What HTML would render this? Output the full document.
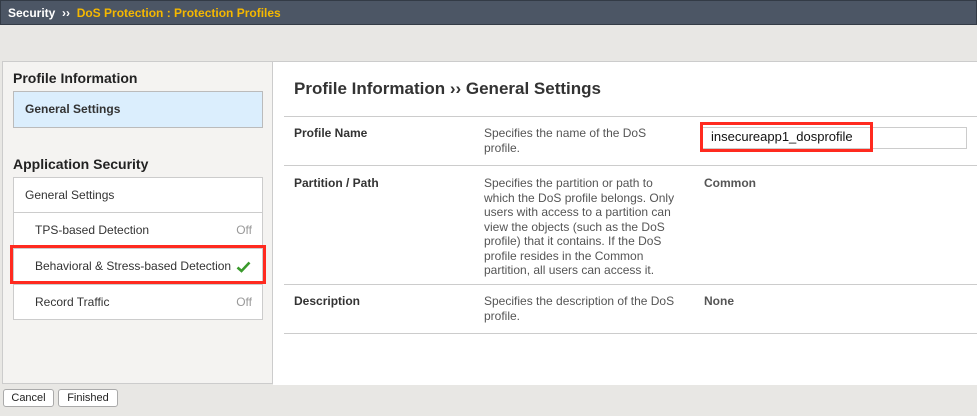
<!DOCTYPE html>
<html><head><style>
body{margin:0;width:977px;height:416px;background:#e8e7e4;font-family:"Liberation Sans",sans-serif;position:relative;overflow:hidden;color:#222}
.a{position:absolute}
.hdr{left:0;top:0;background:#4c5665;border:1px solid #333b46;font-weight:bold;font-size:12px;line-height:24px;color:#fff;padding-left:7px;box-sizing:border-box;width:977px;height:25px}
.hdr span{color:#f5b800}
.side{left:2px;top:61px;width:271px;height:323px;background:#f4f3f1;border:1px solid #ccc;box-sizing:border-box}
.main{left:273px;top:61px;width:704px;height:323px;background:#fff;border-top:1px solid #ccc}
.h{font-weight:bold;font-size:14px;color:#222}
.row{left:13px;width:250px;height:36px;border:1px solid #ccc;box-sizing:border-box;background:#fff;font-size:12px;line-height:34px;color:#333}
.line{left:284px;width:693px;height:1px;background:#ccc}
.lbl{font-size:12px;font-weight:bold;color:#333}
.d{font-size:12px;color:#555;line-height:14.5px;width:200px}
.btn{top:389px;height:16px;border:1px solid #aaa;border-radius:3px;background:#fff;font-size:11px;line-height:16px;text-align:center;color:#222}
</style></head><body>
<div class="a hdr">Security &nbsp;›› &nbsp;<span>DoS Protection : Protection Profiles</span></div>
<div class="a side"></div>
<div class="a main"></div>
<div class="a h" style="left:13px;top:70px">Profile Information</div>
<div class="a" style="left:13px;top:91px;width:250px;height:37px;background:#dbeefd;border:1px solid #bbb;box-sizing:border-box;font-size:12px;font-weight:bold;line-height:34px;padding-left:11px;color:#333">General Settings</div>
<div class="a h" style="left:13px;top:156px">Application Security</div>
<div class="a row" style="top:177px;padding-left:11px">General Settings</div>
<div class="a row" style="top:212px;padding-left:21px">TPS-based Detection<span style="position:absolute;right:10px;color:#999">Off</span></div>
<div class="a row" style="top:248px;padding-left:21px">Behavioral &amp; Stress-based Detection<svg style="position:absolute;right:11px;top:12px" width="15" height="12" viewBox="0 0 15 12"><path d="M1.5 6.5 L5.5 10 L13.5 1.5" stroke="#3a9a2c" stroke-width="2.6" fill="none"/></svg></div>
<div class="a row" style="top:284px;padding-left:21px">Record Traffic<span style="position:absolute;right:10px;color:#999">Off</span></div>
<div class="a" style="left:10px;top:245px;width:256px;height:39px;border:3px solid #ff2a1f;box-sizing:border-box"></div>
<div class="a" style="left:294px;top:79px;font-size:17px;font-weight:bold;color:#333">Profile Information ›› General Settings</div>
<div class="a line" style="top:116px"></div>
<div class="a lbl" style="left:294px;top:126px">Profile Name</div>
<div class="a d" style="left:484px;top:126px">Specifies the name of the DoS profile.</div>
<div class="a" style="left:700px;top:127px;width:267px;height:22px;border:1px solid #ccc;box-sizing:border-box"></div>
<div class="a" style="left:700px;top:122px;width:173px;height:30px;border:3px solid #ff2a1f;box-sizing:border-box;font-size:13px;line-height:24px;padding-left:8px;color:#111">insecureapp1_dosprofile</div>
<div class="a line" style="top:165px"></div>
<div class="a lbl" style="left:294px;top:176px">Partition / Path</div>
<div class="a d" style="left:484px;top:176px">Specifies the partition or path to which the DoS profile belongs. Only users with access to a partition can view the objects (such as the DoS profile) that it contains. If the DoS profile resides in the Common partition, all users can access it.</div>
<div class="a lbl" style="left:704px;top:176px;color:#555">Common</div>
<div class="a line" style="top:284px"></div>
<div class="a lbl" style="left:294px;top:294px">Description</div>
<div class="a d" style="left:484px;top:294px">Specifies the description of the DoS profile.</div>
<div class="a lbl" style="left:704px;top:294px;color:#555">None</div>
<div class="a line" style="top:333px"></div>
<div class="a btn" style="left:3px;width:49px">Cancel</div>
<div class="a btn" style="left:58px;width:58px">Finished</div>
</body></html>
